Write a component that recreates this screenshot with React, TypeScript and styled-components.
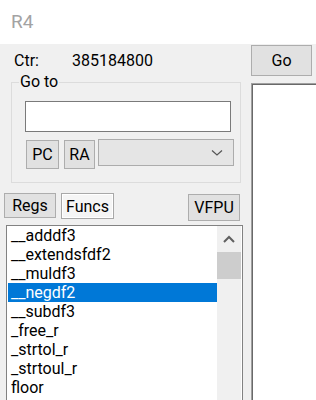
import React from "react";
import styled, { createGlobalStyle } from "styled-components";

const Global = createGlobalStyle`
  html, body { margin: 0; padding: 0; background: #f0f0f0; }
  body { font-family: Roboto, "Noto Sans", sans-serif; font-size: 16px; color: #000; }
  * { box-sizing: border-box; }
`;

const Window = styled.div`
  width: 316px;
  height: 400px;
  overflow: hidden;
  display: flex;
  flex-direction: column;
`;

const TitleBar = styled.div`
  height: 44px;
  flex: none;
  background: #fff;
  display: flex;
  align-items: center;
  padding-left: 11px;
  padding-bottom: 1px;
  color: #a3a3a3;
  font-size: 19px;
`;

const Body = styled.div`
  flex: 1;
  display: flex;
  background: #f0f0f0;
  min-height: 0;
`;

const LeftCol = styled.div`
  width: 250px;
  flex: none;
  display: flex;
  flex-direction: column;
`;

const RightCol = styled.div`
  flex: 1;
  display: flex;
  flex-direction: column;
  padding: 1px 0 0 1px;
  gap: 7px;
`;

const CtrRow = styled.div`
  height: 31px;
  display: flex;
  align-items: center;
  padding-left: 14px;
  padding-top: 1px;
`;

const CtrLabel = styled.span`
  width: 58px;
`;

const Group = styled.fieldset`
  margin: -3px 9px 0 11px;
  height: 111px;
  border: 1px solid #dcdcdc;
  padding: 0 0 0 13px;
  display: flex;
  flex-direction: column;
`;

const Legend = styled.legend`
  padding: 0 1px;
  margin-left: -6px;
  line-height: 20px;
`;

const TextInput = styled.div`
  width: 206px;
  height: 31px;
  margin-top: 9px;
  background: #fff;
  border: 1px solid #7a7a7a;
`;

const ButtonRow = styled.div`
  display: flex;
  align-items: flex-start;
  margin-top: 8px;
`;

const Btn = styled.div<{ $w: number; $h: number; $ml?: number; $mt?: number }>`
  width: ${p => p.$w}px;
  height: ${p => p.$h}px;
  margin-left: ${p => p.$ml ?? 0}px;
  margin-top: ${p => p.$mt ?? 0}px;
  flex: none;
  background: #e1e1e1;
  border: 1px solid #adadad;
  display: flex;
  align-items: center;
  justify-content: center;
`;

const PressedBtn = styled(Btn)`
  background: #f5f5f5;
  border-color: #a8a8a8;
  box-shadow: inset 0 0 0 1px #fff;
`;

const Combo = styled.div`
  width: 136px;
  height: 27px;
  margin-left: 3px;
  margin-top: -1px;
  background: #e5e5e5;
  border: 1px solid #acacac;
  display: flex;
  align-items: center;
  justify-content: flex-end;
  padding-right: 10px;
`;

const TabRow = styled.div`
  display: flex;
  align-items: flex-start;
  margin-top: 10px;
  padding-left: 4px;
`;

const ListBox = styled.div`
  margin: 4px 7px 0 6px;
  flex: 1;
  background: #fff;
  border: 1px solid #828282;
  border-bottom: none;
  display: flex;
  min-height: 0;
`;

const Items = styled.div`
  flex: 1;
  padding: 0 0 0 1px;
`;

const Item = styled.div<{ $sel?: boolean }>`
  height: 19px;
  line-height: 19px;
  padding-left: 3px;
  background: ${p => (p.$sel ? "#0078d7" : "transparent")};
  color: ${p => (p.$sel ? "#fff" : "#000")};
  white-space: nowrap;
`;

const ScrollBar = styled.div`
  width: 24px;
  flex: none;
  background: #f0f0f0;
  margin-right: 1px;
  display: flex;
  flex-direction: column;
`;

const ScrollArrow = styled.div`
  height: 26px;
  display: flex;
  align-items: center;
  justify-content: center;
`;

const Thumb = styled.div`
  height: 27px;
  background: #cdcdcd;
`;

const Panel = styled.div`
  flex: 1;
  background: #fff;
  border-top: 1px solid #a0a0a0;
  border-left: 1px solid #a0a0a0;
  box-shadow: inset 1px 1px 0 #696969;
`;

const items = [
  "__adddf3",
  "__extendsfdf2",
  "__muldf3",
  "__negdf2",
  "__subdf3",
  "_free_r",
  "_strtol_r",
  "_strtoul_r",
  "floor",
];

export default function App() {
  return (
    <Window>
      <Global />
      <TitleBar>R4</TitleBar>
      <Body>
        <LeftCol>
          <CtrRow>
            <CtrLabel>Ctr:</CtrLabel>
            <span>385184800</span>
          </CtrRow>
          <Group>
            <Legend>Go to</Legend>
            <TextInput />
            <ButtonRow>
              <Btn $w={33} $h={29} $ml={1}>PC</Btn>
              <Btn $w={31} $h={29} $ml={5}>RA</Btn>
              <Combo>
                <svg width="12" height="8" viewBox="0 0 12 8">
                  <path d="M1 1.5 L6 6 L11 1.5" fill="none" stroke="#555" strokeWidth="1.2" />
                </svg>
              </Combo>
            </ButtonRow>
          </Group>
          <TabRow>
            <Btn $w={52} $h={25}>Regs</Btn>
            <PressedBtn $w={53} $h={26} $ml={5}>Funcs</PressedBtn>
            <Btn $w={52} $h={27} $ml={74} $mt={1}>VFPU</Btn>
          </TabRow>
          <ListBox>
            <Items>
              {items.map((t, i) => (
                <Item key={t} $sel={i === 3}>{t}</Item>
              ))}
            </Items>
            <ScrollBar>
              <ScrollArrow>
                <svg width="12" height="8" viewBox="0 0 12 8">
                  <path d="M1 7 L6 2 L11 7" fill="none" stroke="#606060" strokeWidth="2" />
                </svg>
              </ScrollArrow>
              <Thumb />
            </ScrollBar>
          </ListBox>
        </LeftCol>
        <RightCol>
          <Btn $w={61} $h={31}>Go</Btn>
          <Panel />
        </RightCol>
      </Body>
    </Window>
  );
}
